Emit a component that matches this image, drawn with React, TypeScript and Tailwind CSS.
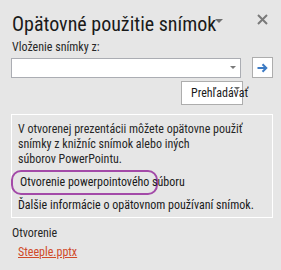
import React from 'react';

const App: React.FC = () => {
  return (
    <div className="w-[281px] h-[270px] bg-[#e6e6e6] text-[#262626] overflow-hidden font-['Segoe_UI',Roboto,sans-serif] font-stretch-condensed">
      {/* header */}
      <div className="flex items-start pl-3 pr-3 pt-[11px]">
        <h1 className="text-[20px] leading-[26px] text-[#1a1a1a] whitespace-nowrap font-stretch-semi-condensed">Opätovné použitie snímok</h1>
        <span className="mt-[8px] -ml-[1px] w-0 h-0 border-l-[4px] border-r-[4px] border-t-[4px] border-l-transparent border-r-transparent border-t-[#6f6f6f]" />
        <button className="ml-auto mt-[3px] mr-[1px]">
          <svg width="11" height="11" viewBox="0 0 11 11">
            <path d="M1 1 L10 10 M10 1 L1 10" stroke="#7a7a7a" strokeWidth="2" />
          </svg>
        </button>
      </div>

      <div className="pl-3 pt-[2px] text-[12px] leading-[16px]">Vloženie snímky z:</div>

      {/* source row */}
      <div className="flex items-center pl-[11px] pr-2 mt-[2px]">
        <div className="w-[231px] h-[20px] bg-white border border-[#abadb3] flex items-center justify-end pr-[4px]">
          <span className="w-0 h-0 border-l-[3px] border-r-[3px] border-t-[3px] border-l-transparent border-r-transparent border-t-[#7a7a7a]" />
        </div>
        <button className="ml-[11px] w-[21px] h-[21px] bg-white border border-[#adadad] flex items-center justify-center">
          <svg width="11" height="10" viewBox="0 0 11 10">
            <path d="M0.5 5 H9 M5.5 1.2 L9.3 5 L5.5 8.8" stroke="#3d7bc4" strokeWidth="2" fill="none" />
          </svg>
        </button>
      </div>

      <div className="flex pl-[181px] mt-[3px]">
        <button className="relative w-[62px] h-[24px] bg-white border border-[#adadad] text-left">
          <span className="absolute left-[9px] top-[3px] text-[12px] leading-[16px] whitespace-nowrap text-[#1a1a1a]">Prehľadávať</span>
          <span className="absolute right-[2px] top-[5px] w-0 h-0 border-l-[3px] border-r-[3px] border-t-[3px] border-l-transparent border-r-transparent border-t-[#6f6f6f]" />
        </button>
      </div>

      {/* info box */}
      <div className="ml-[11px] mr-2 mt-[9px] border border-white px-[6px] pt-[7px] pb-[4px] text-[12px] leading-[15px]">
        <p className="whitespace-nowrap">
          V otvorenej prezentácii môžete opätovne použiť
          <br />
          snímky z knižníc snímok alebo iných
          <br />
          súborov PowerPointu.
        </p>
        <div className="mt-[3px] -ml-[7px] w-[147px] h-[25px] rounded-[10px] border-2 border-[#a34aa8] flex items-center pl-[7px]">
          <a className="whitespace-nowrap text-[#1a1a1a]">Otvorenie powerpointového súboru</a>
        </div>
        <a className="block mt-[3px] whitespace-nowrap text-[#1a1a1a]">Ďalšie informácie o opätovnom používaní snímok.</a>
      </div>

      <div className="pl-3 mt-[7px] text-[12px] leading-[17px]">Otvorenie</div>
      <a className="block ml-[18px] mt-[2px] text-[12px] leading-[17px] text-[#d04a2a] underline">Steeple.pptx</a>
    </div>
  );
};

export default App;
